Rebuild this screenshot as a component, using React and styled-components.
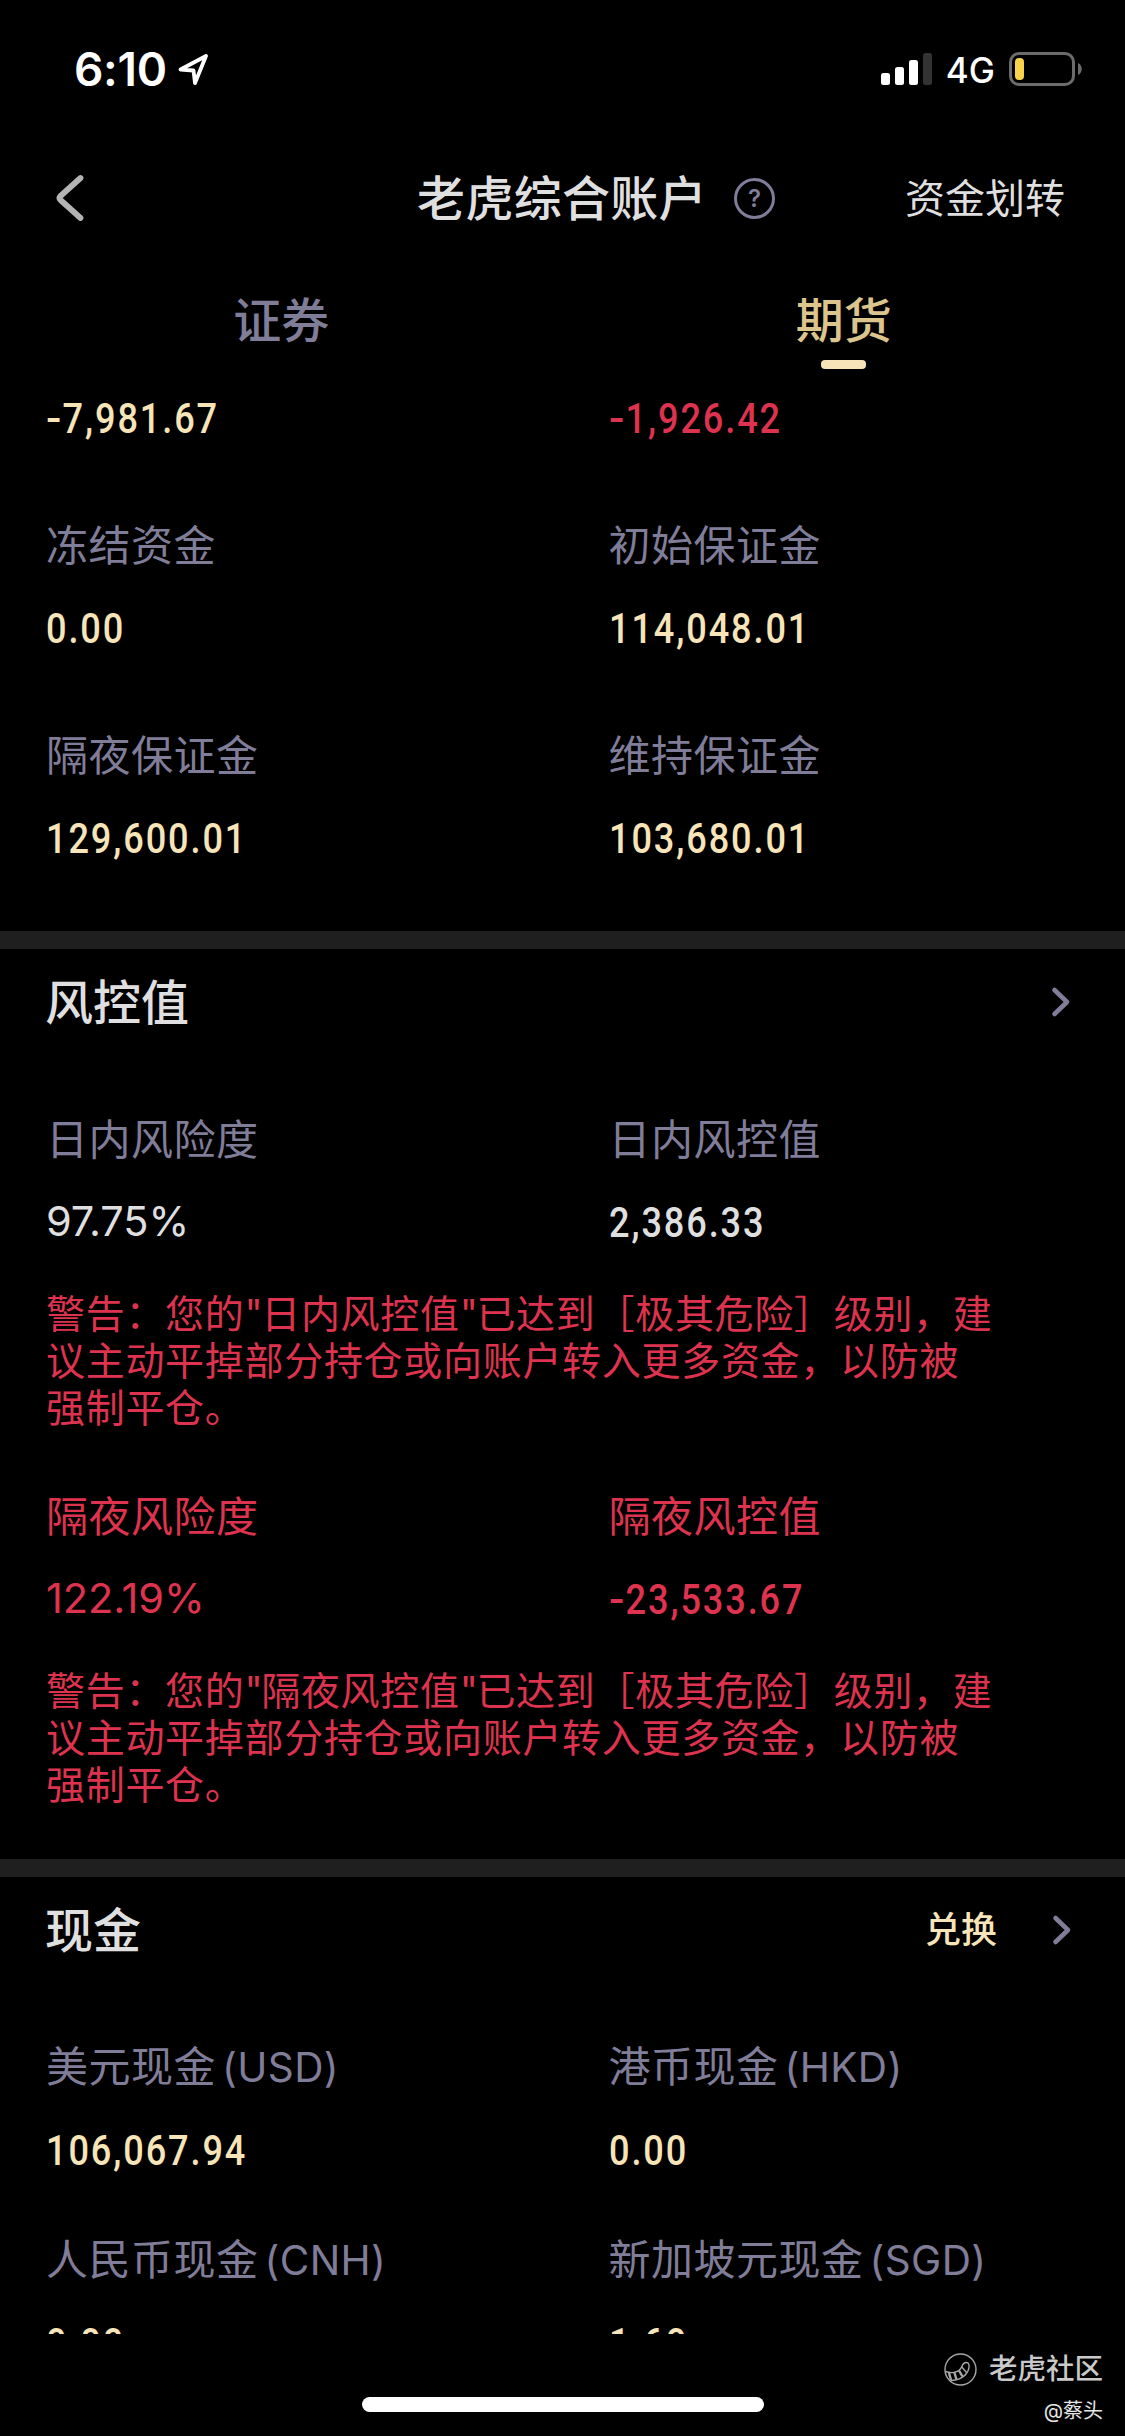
import styled, { createGlobalStyle } from 'styled-components';

const GlobalStyle = createGlobalStyle`
    :root {
        --muted: #807d99;
        --gold: #f7e5b9;
        --gold-tab: #dcc48d;
        --danger: #de334f;
        --light: #dfdfdf;
        --divider: #201f20;
    }

    * {
        box-sizing: border-box;
    }

    body {
        margin: 0;
        background: #000;
        font-family: Inter, 'Noto Sans CJK SC', sans-serif;
    }
`;

const Screen = styled.div`
    position: relative;
    display: flex;
    flex-direction: column;
    width: 1125px;
    height: 2436px;
    background: #000;
    overflow: hidden;
`;

const StatusBar = styled.div`
    display: flex;
    justify-content: space-between;
    align-items: center;
    height: 132px;
    padding: 6px 43px 0 74px;
    color: #fff;
`;

const StatusGroup = styled.div`
    display: flex;
    align-items: center;
    gap: ${({ gap }) => gap}px;
`;

const Time = styled.span`
    font-size: 46px;
    font-weight: 600;
    line-height: 60px;
    letter-spacing: -0.3px;
`;

const Network = styled.span`
    font-size: 35px;
    font-weight: 500;
    line-height: 50px;
    margin-top: 2px;
`;

const NavBar = styled.header`
    display: grid;
    grid-template-columns: 1fr auto 1fr;
    align-items: center;
    height: 132px;
    padding: 0 60px 0 52px;
    color: var(--light);
`;

const Title = styled.h1`
    position: relative;
    margin: 2px 0 0 7px;
    font-size: 48px;
    font-weight: 500;
    line-height: 60px;
    letter-spacing: 0.3px;
`;

const Help = styled.span`
    position: absolute;
    left: 317px;
    top: 9px;
    display: flex;
    justify-content: center;
    align-items: center;
    width: 41px;
    height: 41px;
    border: 3px solid var(--muted);
    border-radius: 50%;
    color: var(--muted);
    font-size: 24px;
    font-weight: 600;
    line-height: 24px;
`;

const NavAction = styled.a`
    justify-self: end;
    margin-top: 2px;
    font-size: 40px;
    line-height: 60px;
`;

const Tabs = styled.nav`
    display: grid;
    grid-template-columns: 1fr 1fr;
    height: 111px;
    flex: none;
`;

const Tab = styled.a`
    display: flex;
    flex-direction: column;
    align-items: center;
    padding-top: 27px;
    font-size: 48px;
    font-weight: 500;
    line-height: 60px;
    color: ${({ active }) => active ? 'var(--gold-tab)' : 'var(--muted)'};

    &::after {
        content: '';
        width: 45px;
        height: 9px;
        margin-top: 9px;
        border-radius: 4px;
        background: ${({ active }) => active ? 'var(--gold)' : 'transparent'};
    }
`;

const Content = styled.main`
    height: 1959px;
    flex: none;
    overflow: hidden;
`;

const Section = styled.section`
    padding: ${({ padding }) => padding};

    & + & {
        border-top: 18px solid var(--divider);
    }
`;

const SectionHeader = styled.div`
    display: flex;
    justify-content: space-between;
    align-items: center;
    height: 106px;
    padding: 0 ${({ right }) => right}px 0 45px;
`;

const SectionTitle = styled.h2`
    margin: 1px 0 0;
    font-size: 48px;
    font-weight: 500;
    line-height: 60px;
    color: var(--light);
`;

const Exchange = styled.a`
    font-size: 36px;
    font-weight: 500;
    line-height: 50px;
    color: var(--gold);
`;

const Grid = styled.div`
    display: grid;
    grid-template-columns: 1fr 1fr;
    row-gap: ${({ gap }) => gap}px;
    padding-top: ${({ top }) => top}px;
`;

const Cell = styled.div`
    display: flex;
    flex-direction: column;
    align-items: flex-start;
    gap: 23px;
    padding-left: 46px;
`;

const Label = styled.span`
    font-size: 42px;
    line-height: 60px;
    letter-spacing: 0.5px;
    color: ${({ color }) => color};
`;

const Currency = styled.span`
    margin-left: 6px;
    font-size: 40.5px;
    letter-spacing: 0.4px;
`;

const Amount = styled.span`
    font-family: Roboto, sans-serif;
    font-size: 42px;
    font-weight: 500;
    line-height: 60px;
    letter-spacing: 2.2px;
    color: ${({ color }) => color};
    transform: scaleX(0.86);
    transform-origin: left;
`;

const Minus = styled.span`
    display: inline-block;
    margin-right: 5px;
    letter-spacing: 0;
    transform: scaleX(1.25);
    transform-origin: left;
`;

const Percent = styled.span`
    font-size: 41.5px;
    line-height: 56px;
    height: 60px;
    letter-spacing: -0.1px;
    color: ${({ color }) => color};
`;

const Warning = styled.p`
    width: 960px;
    margin: 37px 0 0 46px;
    font-size: 39px;
    line-height: 47px;
    letter-spacing: 0.7px;
    color: var(--danger);
`;

const Quote = styled.span`
    letter-spacing: -1.5px;
`;

const HomeIndicator = styled.div`
    width: 402px;
    height: 15px;
    margin: 63px auto 0;
    border-radius: 8px;
    background: #fff;
`;

const Watermark = styled.div`
    position: absolute;
    right: 22px;
    bottom: 11px;
    display: flex;
    flex-direction: column;
    align-items: flex-end;
    color: #c9c9c9;
`;

const Brand = styled.div`
    display: flex;
    align-items: center;
    gap: 12px;
    font-size: 28.5px;
    font-weight: 500;
    line-height: 40px;
`;

const Author = styled.span`
    font-size: 20px;
    line-height: 28px;
    margin-top: 8px;
    color: #e6e6e6;
`;

const LocationArrow = () => (
    <svg width="32" height="34" viewBox="0 0 32 34" fill="none" stroke="#fff" strokeWidth="3.8" strokeLinejoin="round">
        <path d="M2.5 17.5 28 4 17 31 15.5 18.5Z" />
    </svg>
);

const Signal = () => (
    <svg width="51" height="34" viewBox="0 0 51 34" fill="#fff">
        <rect x="0" y="21" width="9" height="12" rx="2.5" />
        <rect x="14" y="15" width="9" height="18" rx="2.5" />
        <rect x="28" y="8" width="9" height="25" rx="2.5" />
        <rect x="42" y="1" width="9" height="32" rx="2.5" fill="#333" />
    </svg>
);

const Battery = () => (
    <svg width="73" height="34" viewBox="0 0 73 34" fill="none">
        <rect x="1.5" y="1.5" width="63" height="31" rx="8.5" stroke="#6c6c6c" strokeWidth="3" />
        <rect x="6" y="6" width="9" height="22" rx="4" fill="#f8d34b" />
        <path d="M69 11C74 13 74 21 69 23Z" fill="#6c6c6c" />
    </svg>
);

const BackIcon = () => (
    <svg width="34" height="50" viewBox="0 0 34 50" fill="none" stroke="#b4b4b4" strokeWidth="5.8" strokeLinecap="round" strokeLinejoin="round">
        <path d="M28.5 5 8.5 23Q6.5 25 8.5 27L28.5 45" />
    </svg>
);

const Chevron = () => (
    <svg width="20" height="32" viewBox="0 0 20 32" fill="none" stroke="#807d99" strokeWidth="4.6" strokeLinecap="round" strokeLinejoin="round">
        <path d="M3.5 4 16 16 3.5 28" />
    </svg>
);

// tiger tail inside a ring
const TigerLogo = () => (
    <svg width="33" height="33" viewBox="0 0 33 33" fill="none" stroke="#a8a8a8" strokeWidth="1.4">
        <circle cx="16.5" cy="16.5" r="15.5" />
        <path d="M1.5 18.5C9 21 15.5 19 17.8 13.5C19 10.5 20.5 9.5 22.3 9.5C25 9.5 25.6 12.5 24.8 15.5C23 22.5 16 27.5 6.5 27.5" />
        <path strokeWidth="2.4" d="M5 20 7 27M10.5 20 12.5 26.5M15 17.5 18.5 23.5" />
        <path d="M17.8 14 22.5 19.5" />
    </svg>
);

const Item = ({ label, currency, value, labelColor = 'var(--muted)', color = 'var(--gold)' }) => {
    const Value = value.endsWith('%') ? Percent : Amount;
    return (
        <Cell>
            {label && (
                <Label color={labelColor}>
                    {label}
                    {currency && <Currency>({currency})</Currency>}
                </Label>
            )}
            <Value color={color}>
                {value.startsWith('-') && <Minus>-</Minus>}
                {value.replace('-', '')}
            </Value>
        </Cell>
    );
};

const RiskWarning = ({ name }) => (
    <Warning>
        警告：您的<Quote>"</Quote>{name}<Quote>"</Quote>已达到［极其危险］级别，建<br />
        议主动平掉部分持仓或向账户转入更多资金，以防被<br />
        强制平仓。
    </Warning>
);

const App = () => {
    return (
        <Screen>
            <GlobalStyle />
            <StatusBar>
                <StatusGroup gap={11}>
                    <Time>6:10</Time>
                    <LocationArrow />
                </StatusGroup>
                <StatusGroup gap={14}>
                    <Signal />
                    <Network>4G</Network>
                    <Battery />
                </StatusGroup>
            </StatusBar>
            <NavBar>
                <BackIcon />
                <Title>老虎综合账户<Help>?</Help></Title>
                <NavAction>资金划转</NavAction>
            </NavBar>
            <Tabs>
                <Tab>证券</Tab>
                <Tab active="true">期货</Tab>
            </Tabs>
            <Content>
                <Section padding="0 0 62px">
                    <Grid top={14} gap={67}>
                        <Item value="-7,981.67" />
                        <Item value="-1,926.42" color="var(--danger)" />
                        <Item label="冻结资金" value="0.00" />
                        <Item label="初始保证金" value="114,048.01" />
                        <Item label="隔夜保证金" value="129,600.01" />
                        <Item label="维持保证金" value="103,680.01" />
                    </Grid>
                </Section>
                <Section padding="0 0 51px">
                    <SectionHeader right={54}>
                        <SectionTitle>风控值</SectionTitle>
                        <Chevron />
                    </SectionHeader>
                    <Grid top={55}>
                        <Item label="日内风险度" value="97.75%" color="var(--light)" />
                        <Item label="日内风控值" value="2,386.33" color="var(--light)" />
                    </Grid>
                    <RiskWarning name="日内风控值" />
                    <Grid top={56}>
                        <Item label="隔夜风险度" value="122.19%" labelColor="var(--danger)" color="var(--danger)" />
                        <Item label="隔夜风控值" value="-23,533.67" labelColor="var(--danger)" color="var(--danger)" />
                    </Grid>
                    <RiskWarning name="隔夜风控值" />
                </Section>
                <Section padding="0">
                    <SectionHeader right={53}>
                        <SectionTitle>现金</SectionTitle>
                        <StatusGroup gap={55}>
                            <Exchange>兑换</Exchange>
                            <Chevron />
                        </StatusGroup>
                    </SectionHeader>
                    <Grid top={54} gap={49}>
                        <Item label="美元现金" currency="USD" value="106,067.94" />
                        <Item label="港币现金" currency="HKD" value="0.00" />
                        <Item label="人民币现金" currency="CNH" value="0.00" />
                        <Item label="新加坡元现金" currency="SGD" value="1.60" />
                    </Grid>
                </Section>
            </Content>
            <HomeIndicator />
            <Watermark>
                <Brand><TigerLogo />老虎社区</Brand>
                <Author>@蔡头</Author>
            </Watermark>
        </Screen>
    );
};

export default App;
